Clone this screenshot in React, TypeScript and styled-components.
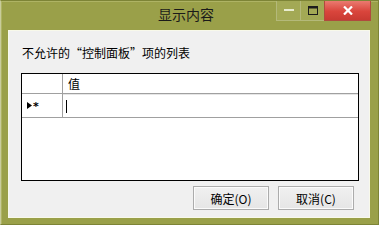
import React from 'react';
import styled, { createGlobalStyle } from 'styled-components';

const GlobalStyle = createGlobalStyle`
    html, body {
        margin: 0;
        padding: 0;
        background: #ffffff;
    }
    body {
        font-family: "Noto Sans CJK SC", "Liberation Sans", sans-serif;
    }
`;

function App() {
    return (
        <>
            <GlobalStyle />
            <Frame>
                <TitleBar>
                    <span />
                    <Title>显示内容</Title>
                    <CaptionButtons>
                        <CaptionButton>
                            <svg width="10" height="3" viewBox="0 0 10 3">
                                <rect x="0" y="0" width="10" height="2" fill="#e8eccf" />
                            </svg>
                        </CaptionButton>
                        <CaptionButton>
                            <svg width="10" height="9" viewBox="0 0 10 9">
                                <rect x="0.5" y="0.5" width="9" height="8" fill="none" stroke="#1c1c1c" />
                                <rect x="0.5" y="0.5" width="9" height="2" fill="#1c1c1c" />
                            </svg>
                        </CaptionButton>
                        <CloseButton>
                            <svg width="10" height="9" viewBox="0 0 10 9">
                                <path d="M1 0.5 L9 8.5 M9 0.5 L1 8.5" stroke="#ffffff" strokeWidth="2.2" />
                            </svg>
                        </CloseButton>
                    </CaptionButtons>
                </TitleBar>
                <Client>
                    <Label>不允许的“控制面板”项的列表</Label>
                    <Grid>
                        <HeaderRow>
                            <RowHeaderCell />
                            <HeaderCell>值</HeaderCell>
                        </HeaderRow>
                        <DataRow>
                            <RowHeaderCell>
                                <svg width="5" height="7" viewBox="0 0 5 7">
                                    <path d="M0 0 L5 3.5 L0 7 Z" fill="#000" />
                                </svg>
                                <Star>*</Star>
                            </RowHeaderCell>
                            <EditCell>
                                <Caret />
                            </EditCell>
                        </DataRow>
                    </Grid>
                    <ButtonRow>
                        <DialogButton>确定(O)</DialogButton>
                        <DialogButton>取消(C)</DialogButton>
                    </ButtonRow>
                </Client>
            </Frame>
        </>
    );
}

const Frame = styled.div`
    display: flex;
    flex-direction: column;
    box-sizing: border-box;
    width: 379px;
    height: 225px;
    background: #9aa049;
    border: 1px solid #7d8436;
    border-left-color: #c9cc9c;
    box-shadow: inset 1px 1px 0 #aeb364;
`;

const TitleBar = styled.div`
    display: grid;
    grid-template-columns: 1fr auto 1fr;
    align-items: start;
    height: 29px;
    padding-right: 7px;
`;

const Title = styled.div`
    padding-top: 4px;
    font-size: 14px;
    line-height: 18px;
    color: #1a1a1a;
`;

const CaptionButtons = styled.div`
    display: flex;
    justify-content: flex-end;
`;

const CaptionButton = styled.div`
    display: flex;
    align-items: center;
    justify-content: center;
    box-sizing: border-box;
    width: 25px;
    height: 20px;
    border: 1px solid #b4b97a;
    border-top: none;
    background: #a3a955;
    margin-left: -1px;
`;

const CloseButton = styled(CaptionButton)`
    width: 47px;
    border-color: #b04a3e;
    background: linear-gradient(#ea7a70, #d9453c 55%, #c93a32);
`;

const Client = styled.div`
    display: flex;
    flex-direction: column;
    flex: 1;
    margin: 0 8px 6px 7px;
    background: #f0f0f0;
    border: 1px solid #f8f9ea;
`;

const Label = styled.div`
    margin: 13px 0 0 13px;
    font-size: 12px;
    line-height: 17px;
    color: #000;
`;

const Grid = styled.div`
    display: flex;
    flex-direction: column;
    box-sizing: border-box;
    height: 108px;
    margin: 12px 10px 0 12px;
    background: #ffffff;
    border: 1px solid #000;
`;

const HeaderRow = styled.div`
    display: flex;
    height: 20px;
    box-sizing: border-box;
    border-bottom: 1px solid #a0a0a0;
`;

const DataRow = styled.div`
    display: flex;
    height: 24px;
    box-sizing: border-box;
    border-bottom: 1px solid #a0a0a0;
`;

const RowHeaderCell = styled.div`
    display: flex;
    align-items: center;
    gap: 1px;
    box-sizing: border-box;
    width: 41px;
    padding-left: 5px;
    border-right: 1px solid #a0a0a0;
    background: #ffffff;
`;

const Star = styled.span`
    font-family: "DejaVu Sans", sans-serif;
    font-size: 11px;
    font-weight: bold;
    line-height: 10px;
    margin-top: 3px;
`;

const HeaderCell = styled.div`
    flex: 1;
    padding: 2px 0 0 5px;
    font-size: 12px;
    line-height: 16px;
    color: #000;
    box-shadow: inset 1px 1px 0 #ffffff;
`;

const EditCell = styled.div`
    display: flex;
    align-items: center;
    flex: 1;
    padding-left: 3px;
    border-top: 1px solid #e6e6e6;
`;

const Caret = styled.div`
    width: 1px;
    height: 13px;
    background: #000;
`;

const ButtonRow = styled.div`
    display: flex;
    justify-content: flex-end;
    gap: 9px;
    margin: 5px 15px 0 0;
`;

const DialogButton = styled.div`
    display: flex;
    align-items: center;
    justify-content: center;
    box-sizing: border-box;
    width: 76px;
    height: 24px;
    font-size: 12px;
    color: #000;
    border: 1px solid #acacac;
    background: linear-gradient(#f0f0f0, #e5e5e5);
    box-shadow: inset 0 0 0 1px #fbfbfb;
`;

export default App;
